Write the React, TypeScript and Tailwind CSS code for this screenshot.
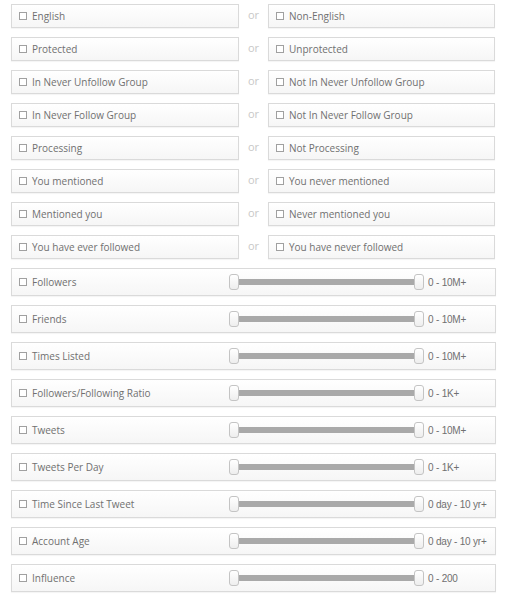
const pairs: [string, string][] = [
  ["English", "Non-English"],
  ["Protected", "Unprotected"],
  ["In Never Unfollow Group", "Not In Never Unfollow Group"],
  ["In Never Follow Group", "Not In Never Follow Group"],
  ["Processing", "Not Processing"],
  ["You mentioned", "You never mentioned"],
  ["Mentioned you", "Never mentioned you"],
  ["You have ever followed", "You have never followed"],
];

const ranges: [string, string][] = [
  ["Followers", "0 - 10M+"],
  ["Friends", "0 - 10M+"],
  ["Times Listed", "0 - 10M+"],
  ["Followers/Following Ratio", "0 - 1K+"],
  ["Tweets", "0 - 10M+"],
  ["Tweets Per Day", "0 - 1K+"],
  ["Time Since Last Tweet", "0 day - 10 yr+"],
  ["Account Age", "0 day - 10 yr+"],
  ["Influence", "0 - 200"],
];

const box =
  "border border-[#dadada] bg-gradient-to-b from-white to-[#f6f6f6] shadow-[0_1px_1px_rgba(0,0,0,0.04)]";

function Check({ label }: { label: string }) {
  return (
    <label className="flex items-center gap-[5px] text-[10px] text-[#707070]">
      <span className="w-[8px] h-[8px] border border-[#a0a0a0] bg-white shrink-0" />
      {label}
    </label>
  );
}

function Slider() {
  return (
    <div className="relative w-[195px] h-[16px]">
      <div className="absolute left-[6px] right-[6px] top-[5px] h-[6px] bg-[#a9a9a9]" />
      <div className="absolute left-0 top-0 w-[10px] h-[16px] rounded-[3px] border border-[#c4c4c4] bg-gradient-to-b from-white to-[#eee]" />
      <div className="absolute right-0 top-0 w-[10px] h-[16px] rounded-[3px] border border-[#c4c4c4] bg-gradient-to-b from-white to-[#eee]" />
    </div>
  );
}

export default function App() {
  return (
    <div className="bg-white w-[507px] h-[600px] pl-[11px] pt-[4px] font-['Open_Sans',sans-serif]">
      <div className="flex flex-col gap-[9px] w-[485px]">
        {pairs.map(([a, b]) => (
          <div key={a} className="flex items-center">
            <div className={`${box} w-[228px] h-[24px] pl-[7px] flex items-center`}>
              <Check label={a} />
            </div>
            <span className="w-[29px] text-center text-[11px] text-[#c8c8c8] pb-[1px]">or</span>
            <div className={`${box} w-[227px] h-[24px] pl-[7px] flex items-center`}>
              <Check label={b} />
            </div>
          </div>
        ))}
        {ranges.map(([name, val]) => (
          <div key={name} className={`${box} h-[28px] flex items-center`}>
            <div className="w-[217px] pl-[7px]">
              <Check label={name} />
            </div>
            <Slider />
            <span className="ml-[4px] text-[10px] tracking-[-0.2px] text-[#707070] font-['Liberation_Sans',sans-serif]">
              {val}
            </span>
          </div>
        ))}
      </div>
    </div>
  );
}
